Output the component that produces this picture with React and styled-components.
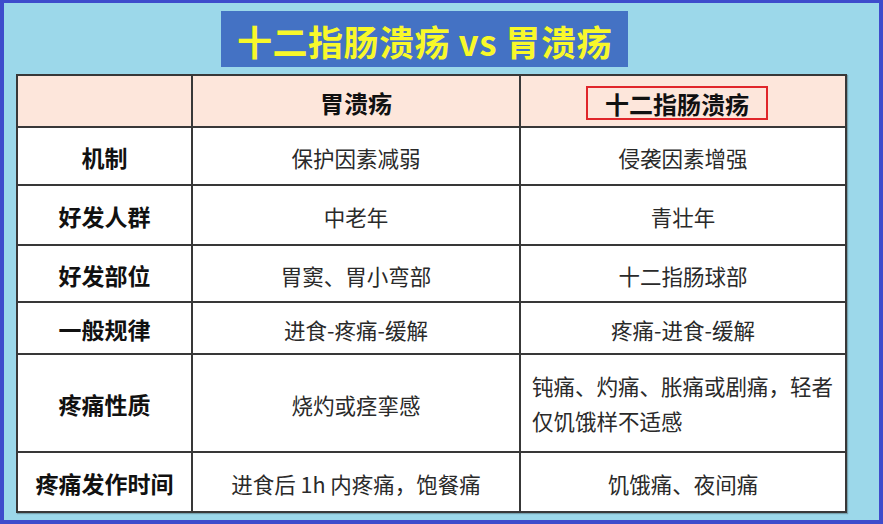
import React from 'react';
import styled, { createGlobalStyle } from 'styled-components';

const GlobalStyle = createGlobalStyle`
  html, body {
    margin: 0;
    padding: 0;
  }
  body {
    font-family: "Noto Sans CJK SC", "Noto Sans", sans-serif;
  }
`;

const Frame = styled.div`
  box-sizing: border-box;
  width: 883px;
  height: 524px;
  background-color: #9cd8ea;
  border: 4px solid #3e4ccc;
  border-top-width: 3px;
  padding: 8px 0 7px 12px;
  display: flex;
  flex-direction: column;
  gap: 7px;
`;

const TitleRow = styled.div`
  display: flex;
  padding-left: 205px;
`;

const Title = styled.h1`
  margin: 0;
  width: 407px;
  height: 56px;
  padding-top: 2px;
  box-sizing: border-box;
  background-color: #4472c4;
  color: #f8f82a;
  font-size: 35px;
  font-weight: 700;
  display: flex;
  align-items: center;
  justify-content: center;
  white-space: nowrap;
  letter-spacing: 0.5px;
`;

const Grid = styled.div`
  width: 831px;
  box-sizing: border-box;
  display: grid;
  grid-template-columns: 173px 326px 324px;
  grid-template-rows: 50px 56px 58px 55px 50px 96px 58px;
  gap: 2px;
  padding: 2px;
  background-color: #383838;
  box-shadow: 1px 1px 1px rgba(0, 0, 0, 0.25);
`;

const Cell = styled.div`
  background-color: ${(p) => (p.$head ? '#fde6db' : '#ffffff')};
  display: flex;
  align-items: center;
  justify-content: ${(p) => (p.$left ? 'flex-start' : 'center')};
  padding: ${(p) => (p.$left ? '0 4px 0 11px' : '4px 0 0 0')};
  box-sizing: border-box;
  color: ${(p) => (p.$bold ? '#111111' : '#2a2a2a')};
  font-size: ${(p) => (p.$bold ? '23px' : '21.5px')};
  font-weight: ${(p) => (p.$bold ? 700 : 400)};
  line-height: ${(p) => (p.$left ? '35px' : '1.2')};
  white-space: ${(p) => (p.$left ? 'normal' : 'nowrap')};
`;

const HeadText = styled.span`
  font-size: 24px;
  font-weight: 700;
  color: #111111;
`;

const Boxed = styled.span`
  box-sizing: border-box;
  width: 182px;
  height: 34px;
  margin-left: 65px;
  border: 2px solid #e0262a;
  display: flex;
  align-items: center;
  justify-content: center;
  font-size: 24px;
  font-weight: 700;
  color: #111111;
`;

const rows = [
  ['机制', '保护因素减弱', '侵袭因素增强'],
  ['好发人群', '中老年', '青壮年'],
  ['好发部位', '胃窦、胃小弯部', '十二指肠球部'],
  ['一般规律', '进食-疼痛-缓解', '疼痛-进食-缓解'],
  ['疼痛性质', '烧灼或痉挛感', '钝痛、灼痛、胀痛或剧痛，轻者仅饥饿样不适感', true],
  ['疼痛发作时间', '进食后 1h 内疼痛，饱餐痛', '饥饿痛、夜间痛'],
];

const App = () => {
  return (
    <>
      <GlobalStyle />
      <Frame>
        <TitleRow>
          <Title>十二指肠溃疡 vs 胃溃疡</Title>
        </TitleRow>
        <Grid>
          <Cell $head />
          <Cell $head>
            <HeadText>胃溃疡</HeadText>
          </Cell>
          <Cell $head $left style={{ padding: '4px 0 0 0' }}>
            <Boxed>十二指肠溃疡</Boxed>
          </Cell>
          {rows.map(([label, gastric, duodenal, wrap]) => (
            <React.Fragment key={label}>
              <Cell $bold>{label}</Cell>
              <Cell>{gastric}</Cell>
              <Cell $left={wrap}>{duodenal}</Cell>
            </React.Fragment>
          ))}
        </Grid>
      </Frame>
    </>
  );
};

export default App;
